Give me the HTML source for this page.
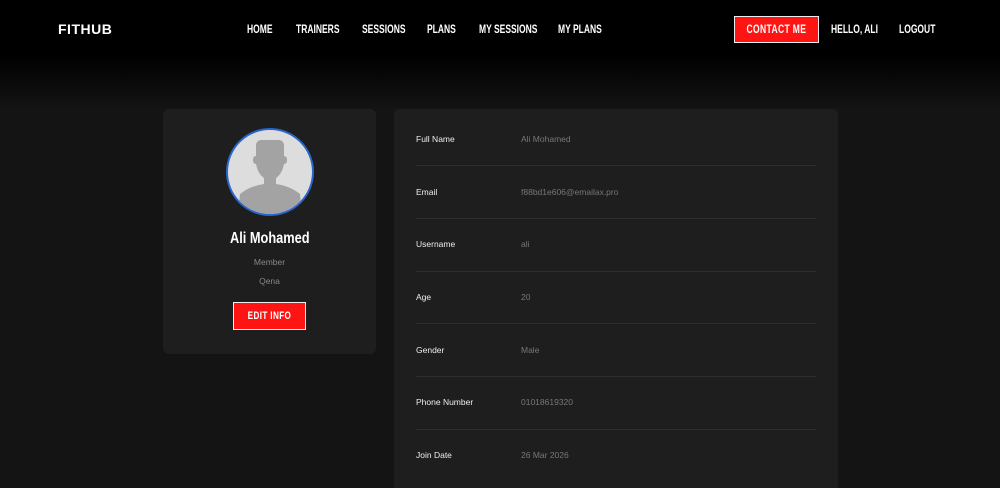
<!DOCTYPE html>
<html><head><style>
*{margin:0;padding:0;box-sizing:border-box}
html,body{width:1000px;height:488px;overflow:hidden}
body{background:#141414;font-family:"Liberation Sans",sans-serif;position:relative}
.hdr{position:absolute;left:0;top:0;width:1000px;height:110px;background:linear-gradient(#000 0,#000 55px,#141414 110px)}
.c{font-family:"Liberation Sans",sans-serif;font-weight:bold;color:#fff;position:absolute;white-space:nowrap;transform-origin:left center;transform:scaleX(0.74)}
.nav{font-size:11.5px;top:24px}
.logo{left:58px;top:21px;font-size:14px;letter-spacing:0.5px;transform:none}
.btn{position:absolute;background:#ff1414;border:1px solid #eee;display:flex;align-items:center;justify-content:center;color:#fff;font-weight:bold}
.btn span{display:inline-block;transform:scaleX(0.74);white-space:nowrap;letter-spacing:0.5px}
.card{position:absolute;background:#1e1e1e;border-radius:6px}
.lbl{position:absolute;left:22px;font-size:8.5px;color:#eee}
.val{position:absolute;left:127px;font-size:8.5px;color:#777}
.hr{position:absolute;left:22px;width:400px;height:1px;background:#2e2e2e}
</style></head><body>
<div class="hdr"></div>
<div class="c logo">FITHUB</div>
<div class="c nav" style="left:247px">HOME</div>
<div class="c nav" style="left:296px">TRAINERS</div>
<div class="c nav" style="left:362px">SESSIONS</div>
<div class="c nav" style="left:427px">PLANS</div>
<div class="c nav" style="left:479px">MY SESSIONS</div>
<div class="c nav" style="left:558px">MY PLANS</div>
<div class="btn" style="left:734px;top:16px;width:85px;height:27px;font-size:11.5px"><span>CONTACT ME</span></div>
<div class="c nav" style="left:831px">HELLO, ALI</div>
<div class="c nav" style="left:899px">LOGOUT</div>

<div class="card" style="left:163px;top:109px;width:213px;height:245px">
  <div style="position:absolute;left:63px;top:19px;width:88px;height:88px;border-radius:50%;border:2px solid #2a66cc;background:#ddd;overflow:hidden">
    <svg width="84" height="84" viewBox="0 0 84 84" style="position:absolute;left:0;top:0">
      <path d="M28 16 Q28 10 34 10 L50 10 Q56 10 56 16 L56 26 Q59 26 59 30 Q59 34 56 34 Q54 44 48 48 L48 54 Q62 56 72 64 L74 84 L10 84 L12 64 Q22 56 36 54 L36 48 Q30 44 28 34 Q25 34 25 30 Q25 26 28 26 Z" fill="#a3a3a3"/>
    </svg>
  </div>
  <div style="position:absolute;left:0;width:213px;text-align:center;top:121px;font-size:16px;font-weight:bold;color:#fff"><span style="display:inline-block;transform:scaleX(0.8)">Ali Mohamed</span></div>
  <div style="position:absolute;left:0;width:213px;text-align:center;top:148px;font-size:8.5px;color:#888">Member</div>
  <div style="position:absolute;left:0;width:213px;text-align:center;top:167px;font-size:8.5px;color:#888">Qena</div>
  <div class="btn" style="left:70px;top:193px;width:73px;height:28px;font-size:11px"><span>EDIT INFO</span></div>
</div>

<div class="card" style="left:394px;top:109px;width:444px;height:400px">
  <div class="lbl" style="top:25px">Full Name</div><div class="val" style="top:25px">Ali Mohamed</div>
  <div class="hr" style="top:56px"></div>
  <div class="lbl" style="top:78px">Email</div><div class="val" style="top:78px">f88bd1e606@emailax.pro</div>
  <div class="hr" style="top:109px"></div>
  <div class="lbl" style="top:130px">Username</div><div class="val" style="top:130px">ali</div>
  <div class="hr" style="top:162px"></div>
  <div class="lbl" style="top:183px">Age</div><div class="val" style="top:183px">20</div>
  <div class="hr" style="top:214px"></div>
  <div class="lbl" style="top:236px">Gender</div><div class="val" style="top:236px">Male</div>
  <div class="hr" style="top:267px"></div>
  <div class="lbl" style="top:288px">Phone Number</div><div class="val" style="top:288px">01018619320</div>
  <div class="hr" style="top:320px"></div>
  <div class="lbl" style="top:341px">Join Date</div><div class="val" style="top:341px">26 Mar 2026</div>
</div>
</body></html>
